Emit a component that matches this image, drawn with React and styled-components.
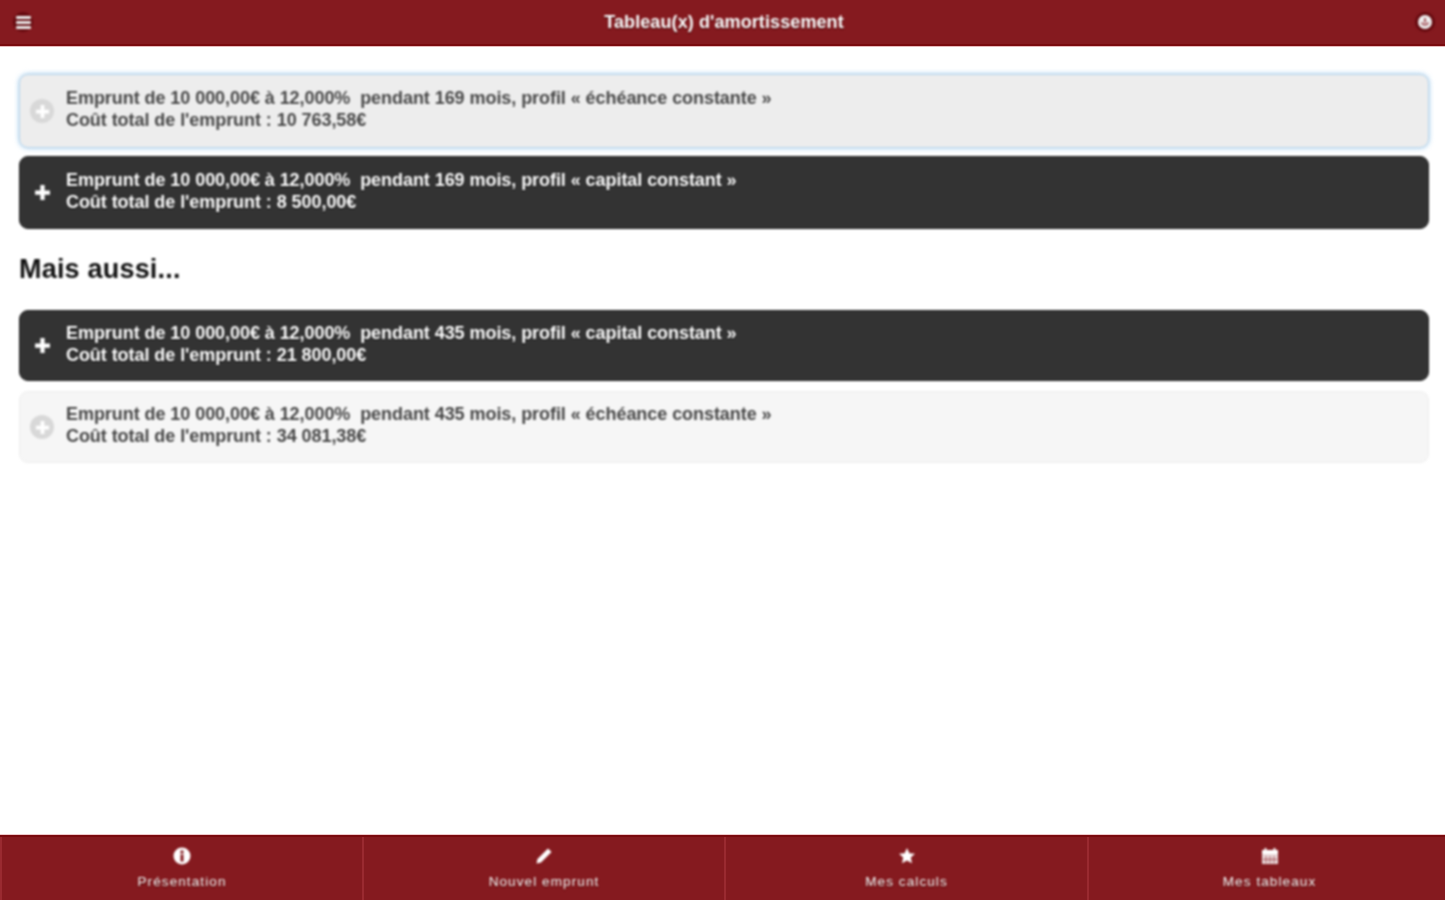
import React from "react";
import styled, { createGlobalStyle } from "styled-components";

const Global = createGlobalStyle`
  html, body, #root { margin: 0; height: 100%; background: #fff; }
  body { font-family: "Liberation Sans", Arial, sans-serif; overflow: hidden; }
`;
const Page = styled.div`
  height: 900px; display: flex; flex-direction: column; overflow: hidden;
`;
const Header = styled.header`
  box-sizing: border-box; height: 46px; flex: none; background: #851a1f;
  border-bottom: 2px solid #7a0a0e; box-shadow: 0 1px 0 #e8b9bb;
  display: flex; align-items: center; justify-content: space-between; padding: 0 10px 0 13px;
`;
const Title = styled.h1`
  margin: 0; font-size: 18px; font-weight: 700; color: #fff; text-shadow: 0 1px 1px #3a0507;
  letter-spacing: 0.1px; filter: blur(0.8px);
`;
const RoundIcon = styled.span`
  width: 20px; height: 20px; border-radius: 50%; background: #64090e; filter: blur(0.8px);
  display: flex; align-items: center; justify-content: center;
`;
const Main = styled.main`
  flex: 1; display: flex; flex-direction: column; padding: 28px 16px 0 19px;
`;
const Card = styled.div`
  display: flex; align-items: center; gap: 12px; box-sizing: border-box; filter: blur(0.8px);
  height: ${p => p.$h}px; margin-bottom: ${p => p.$mb}px; padding: 0 14px 4px 10px; border-radius: 9px;
  font-size: 18px; line-height: 22px; font-weight: 700;
  background: ${p => p.$tone === "dark" ? "#333" : p.$tone === "focus" ? "#ededed" : "#f6f6f6"};
  color: ${p => p.$tone === "dark" ? "#fff" : "#444"};
  border: 1px solid ${p => p.$tone === "dark" ? "#222" : p.$tone === "focus" ? "#b9d6ec" : "#eee"};
  box-shadow: ${p => p.$tone === "focus" ? "0 0 5px #9cc8ea" : "none"};
  text-shadow: ${p => p.$tone === "dark" ? "0 1px 1px #111" : "0 1px 0 #fff"};
`;
const Lines = styled.div`display: flex; flex-direction: column; letter-spacing: -0.06px;`;
const Line = styled.span`white-space: pre;`;
const Heading = styled.h2`
  margin: 0 0 26px; font-size: 27px; line-height: 30px; font-weight: 700; color: #111; letter-spacing: 0.2px;
  filter: blur(0.8px);
`;
const PlusBadge = styled.span`
  width: 24px; height: 24px; flex: none; border-radius: 50%; margin-top: 4px;
  display: flex; align-items: center; justify-content: center;
  background: ${p => p.$dark ? "transparent" : "#d8d8d8"};
`;
const Footer = styled.footer`
  box-sizing: border-box; height: 65px; flex: none; background: #851a1f;
  display: grid; grid-template-columns: 362px 362px 363px 363px;
  border-top: 2px solid #7a0a0e; box-shadow: 0 -1px 0 #eec9cb;
`;
const Tab = styled.div`
  display: flex; flex-direction: column; align-items: center; padding-top: 9px; gap: 9px;
  border-left: 2px solid #9a2a30;
  color: #fff; font-size: 13.5px; line-height: 16px; letter-spacing: 1.1px; text-shadow: 0 1px 1px #400;
`;
const TabIcon = styled.span`
  width: 20px; height: 19px; display: flex; align-items: center; justify-content: center; filter: blur(0.8px);
`;
const TabLabel = styled.span`filter: blur(0.8px);`;

const Plus = ({ size = 16 }) => (
  <svg width={size} height={size} viewBox="0 0 16 16"><path d="M6 1h4v5h5v4h-5v5H6v-5H1V6h5z" fill="#fff" /></svg>
);
const cards = {
  a: ["Emprunt de 10 000,00€ à 12,000%  pendant 169 mois, profil « échéance constante »", "Coût total de l'emprunt : 10 763,58€"],
  b: ["Emprunt de 10 000,00€ à 12,000%  pendant 169 mois, profil « capital constant »", "Coût total de l'emprunt : 8 500,00€"],
  c: ["Emprunt de 10 000,00€ à 12,000%  pendant 435 mois, profil « capital constant »", "Coût total de l'emprunt : 21 800,00€"],
  d: ["Emprunt de 10 000,00€ à 12,000%  pendant 435 mois, profil « échéance constante »", "Coût total de l'emprunt : 34 081,38€"],
};
const LoanCard = ({ lines, tone, h, mb }) => (
  <Card $tone={tone} $h={h} $mb={mb}>
    <PlusBadge $dark={tone === "dark"}><Plus size={tone === "dark" ? 17 : 15} /></PlusBadge>
    <Lines>{lines.map(l => <Line key={l}>{l}</Line>)}</Lines>
  </Card>
);

export default function App() {
  return (
    <>
      <Global />
      <Page>
        <Header>
          <RoundIcon>
            <svg width="15" height="13" viewBox="0 0 15 13" fill="#eee"><rect y="0" width="15" height="3" rx="1" /><rect y="5" width="15" height="3" rx="1" /><rect y="10" width="15" height="3" rx="1" /></svg>
          </RoundIcon>
          <Title>Tableau(x) d'amortissement</Title>
          <RoundIcon>
            <svg width="16" height="16" viewBox="0 0 16 16"><circle cx="8" cy="8" r="7" fill="#eee" /><path d="M8 4v4.500M4.800 8.500a3.400 3.400 0 0 0 6.400 0" stroke="#a85a60" strokeWidth="2" fill="none" /></svg>
          </RoundIcon>
        </Header>
        <Main>
          <LoanCard lines={cards.a} tone="focus" h={74} mb={8} />
          <LoanCard lines={cards.b} tone="dark" h={73} mb={25} />
          <Heading>Mais aussi...</Heading>
          <LoanCard lines={cards.c} tone="dark" h={71} mb={10} />
          <LoanCard lines={cards.d} tone="light" h={72} mb={0} />
        </Main>
        <Footer>
          <Tab>
            <TabIcon><svg width="18" height="18" viewBox="0 0 18 18"><circle cx="9" cy="9" r="8.500" fill="#fff" /><rect x="7.500" y="7.500" width="3" height="7" fill="#851a1f" /><rect x="7.500" y="3.500" width="3" height="3" fill="#851a1f" /></svg></TabIcon>
            <TabLabel>Présentation</TabLabel>
          </Tab>
          <Tab>
            <TabIcon><svg width="18" height="18" viewBox="0 0 18 18"><path d="M13 1.500l3.500 3.500L6 15.500 1.500 16.500 2.500 12z" fill="#fff" /></svg></TabIcon>
            <TabLabel>Nouvel emprunt</TabLabel>
          </Tab>
          <Tab>
            <TabIcon><svg width="18" height="18" viewBox="0 0 18 18"><path d="M9 1l2.400 5.200 5.600.6-4.200 3.800 1.200 5.600L9 13.400 4 16.200l1.200-5.600L1 6.800l5.600-.6z" fill="#fff" /></svg></TabIcon>
            <TabLabel>Mes calculs</TabLabel>
          </Tab>
          <Tab>
            <TabIcon><svg width="18" height="18" viewBox="0 0 18 18"><path d="M1 3h16v14H1z" fill="#e9d8d9" /><path d="M1 3h16v4H1z" fill="#fff" /><path d="M4.500 1v3M13.500 1v3" stroke="#fff" strokeWidth="2" /><path d="M5 9v7M9 9v7M13 9v7M2 12.500h14" stroke="#a85a60" strokeWidth="1" /></svg></TabIcon>
            <TabLabel>Mes tableaux</TabLabel>
          </Tab>
        </Footer>
      </Page>
    </>
  );
}
